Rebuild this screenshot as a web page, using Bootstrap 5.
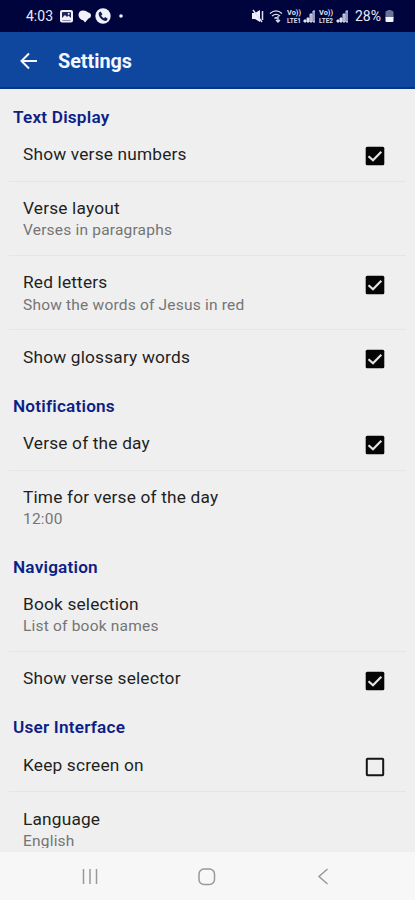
<!DOCTYPE html>
<html lang="en">
<head>
<meta charset="utf-8">
<meta name="viewport" content="width=device-width, initial-scale=1">
<title>Settings</title>
<link href="https://cdn.jsdelivr.net/npm/bootstrap@5.3.0/dist/css/bootstrap.min.css" rel="stylesheet">
<style>
body{font-family:Roboto,"Liberation Sans",sans-serif;background:#efefef;color:#1f1f1f}
.screen{height:900px;max-width:415px}
.statusbar{height:32px;background:#00043c;color:#e8eaf6;font-size:14px;padding:0 21px 0 26px}
.appbar{height:57px;background:#0f479f;border-bottom:2px solid #073583;padding-left:19px;color:#f5f7ff}
.appbar h1{font-size:19.8px;font-weight:700;margin:4px 0 0 19px;line-height:24px}
.appbar svg{margin-top:2px}
.prefs{padding-top:6.2px;margin-bottom:4px}
.group-title{height:32.8px;padding:10.6px 0 0 13px;font-size:17.2px;line-height:22px;font-weight:600;color:#0d1f86;margin:0;letter-spacing:.2px}
.pref{height:53.75px;margin:0 9px;padding:15.3px 21px 0 14px}
.pref.two-line{height:74.3px}
.pref.ruled{border-bottom:1px solid #e5e5e5}
.pref-title{font-size:17.3px;line-height:22px;letter-spacing:.18px}
.pref-sub{font-size:15.5px;line-height:20px;letter-spacing:.2px;color:#757575;margin-top:1.2px}
.pref svg{margin-top:3.2px}
.navkeys{height:48px;background:#f7f7f7}
</style>
<script src="https://cdn.jsdelivr.net/npm/bootstrap@5.3.0/dist/js/bootstrap.bundle.min.js"></script>
</head>
<body>
<svg class="d-none">
<symbol id="checked" viewBox="0 0 20 20"><rect x=".7" y=".7" width="18.6" height="18.6" rx="1.5" fill="#050505"/><path d="M3.5 10.2 8 14.2 16.3 5.7" fill="none" stroke="#e4e4e4" stroke-width="2.2"/></symbol>
<symbol id="unchecked" viewBox="0 0 20 20"><rect x="1.8" y="1.8" width="16.4" height="16.4" rx=".8" fill="none" stroke="#151515" stroke-width="2"/></symbol>
<symbol id="signal" viewBox="0 0 12 14"><path d="M1 11h2v2H1zM4 9h2v4H4z" fill="#dfe1f0"/><path d="M7 5h2v8H7z" fill="#8b8fb5"/><path d="M10 2h2v11h-2z" fill="#444a80"/></symbol>
</svg>
<div class="screen d-flex flex-column overflow-hidden">
<header class="statusbar d-flex align-items-center justify-content-between flex-shrink-0">
<div class="d-flex align-items-center">
<span>4:03</span>
<svg class="ms-1" width="66" height="16" viewBox="0 0 66 16">
<rect x="3" y="2" width="13" height="12.5" rx="2" fill="#f0f1fa"/><rect x="5" y="4" width="9" height="8.5" rx="1" fill="#20265c"/><path d="M5 12v-2l3-3 2 2 1.500-1.500L14 10v2z" fill="#f0f1fa"/><circle cx="11.700" cy="5.800" r="1" fill="#f0f1fa"/>
<path d="M26 2.500c3 0 4 1 5 2 2 0 3 1.400 3 3S33 10 31.500 10.500L28 14.500l-1.500-2C23.500 12 21.500 9.500 21.500 7S23 2.500 26 2.500z" fill="#f0f1fa"/>
<g transform="translate(1.500)"><circle cx="44.500" cy="8" r="7.700" fill="#f0f1fa"/><path d="M40.500 4.500l1.700-1 1.700 2.800-1.200 1.200c.7 1.300 1.500 2.100 2.800 2.800l1.200-1.200 2.600 1.700-1 1.700c-1 1-4.200-.1-6-2s-2.700-5-1.800-6z" fill="#151a50"/></g>
<circle cx="64" cy="8" r="1.800" fill="#f0f1fa"/></svg>
</div>
<div class="d-flex align-items-center">
<svg width="104" height="16" viewBox="0 0 104 16" fill="none" stroke="#dfe1f0">
<path d="M1 5h3l5-3v12l-5-3H1z" fill="#eef" stroke="none"/><path d="M2 2l9 12M11.500 3v9" stroke-width="1.500"/>
<path d="M19 5.500c4-3.500 8-3.500 12 0M21 8c3-2.500 5-2.500 8 0M23.500 10.500c1-1 2-1 3 0" stroke-width="1.300"/><path d="M27 8v6m-2-2 2 2 2-2" stroke-width="1.300"/>
<g fill="#dfe1f0" stroke="none" font-family="Roboto" font-weight="700" font-size="6.800"><text x="36" y="7.300" textLength="14" lengthAdjust="spacingAndGlyphs">Vo))</text><text x="36" y="14.600" textLength="14" lengthAdjust="spacingAndGlyphs">LTE1</text><text x="68" y="7.300" textLength="14" lengthAdjust="spacingAndGlyphs">Vo))</text><text x="68" y="14.600" textLength="14" lengthAdjust="spacingAndGlyphs">LTE2</text></g>
<use href="#signal" x="52" y="1" width="12" height="14"/><use href="#signal" x="85" y="1" width="12" height="14"/>
</svg>
<span>28%</span>
<svg class="ms-1" width="9" height="14" viewBox="0 0 8 14"><path d="M2 1h4v1h1q1 0 1 1v6H0V3q0-1 1-1h1z" fill="#6c7096"/><path d="M0 8h8v4q0 1-1 1H1q-1 0-1-1z" fill="#f4f4ff"/></svg>
</div>
</header>
<nav class="appbar d-flex align-items-center flex-shrink-0">
<svg width="20" height="18" viewBox="0 0 20 18" fill="none" stroke="currentColor" stroke-width="2"><path d="M18 9H3M10 1.500 2.500 9 10 16.500"/></svg>
<h1>Settings</h1>
</nav>
<main class="prefs flex-grow-1 overflow-hidden">
<h2 class="group-title">Text Display</h2>
<div class="pref ruled d-flex justify-content-between"><div class="pref-title">Show verse numbers</div><svg width="20" height="20"><use href="#checked"/></svg></div>
<div class="pref two-line ruled"><div class="pref-title">Verse layout</div><div class="pref-sub">Verses in paragraphs</div></div>
<div class="pref two-line ruled d-flex justify-content-between"><div><div class="pref-title">Red letters</div><div class="pref-sub">Show the words of Jesus in red</div></div><svg width="20" height="20"><use href="#checked"/></svg></div>
<div class="pref d-flex justify-content-between"><div class="pref-title">Show glossary words</div><svg width="20" height="20"><use href="#checked"/></svg></div>
<h2 class="group-title">Notifications</h2>
<div class="pref ruled d-flex justify-content-between"><div class="pref-title">Verse of the day</div><svg width="20" height="20"><use href="#checked"/></svg></div>
<div class="pref two-line"><div class="pref-title">Time for verse of the day</div><div class="pref-sub">12:00</div></div>
<h2 class="group-title">Navigation</h2>
<div class="pref two-line ruled"><div class="pref-title">Book selection</div><div class="pref-sub">List of book names</div></div>
<div class="pref d-flex justify-content-between"><div class="pref-title">Show verse selector</div><svg width="20" height="20"><use href="#checked"/></svg></div>
<h2 class="group-title">User Interface</h2>
<div class="pref ruled d-flex justify-content-between"><div class="pref-title">Keep screen on</div><svg width="20" height="20"><use href="#unchecked"/></svg></div>
<div class="pref two-line"><div class="pref-title">Language</div><div class="pref-sub">English</div></div>
</main>
<footer class="navkeys d-flex flex-shrink-0 align-items-center justify-content-between">
<svg width="415" height="48" viewBox="0 0 415 48" fill="none" stroke="#999" stroke-width="1.500"><path d="M83.500 17v15M90 17v15M96.500 17v15"/><rect x="199" y="17" width="15.500" height="15.500" rx="5"/><path d="M327.500 17 319 24.500 327.500 32"/></svg>
</footer>
</div>
</body>
</html>
